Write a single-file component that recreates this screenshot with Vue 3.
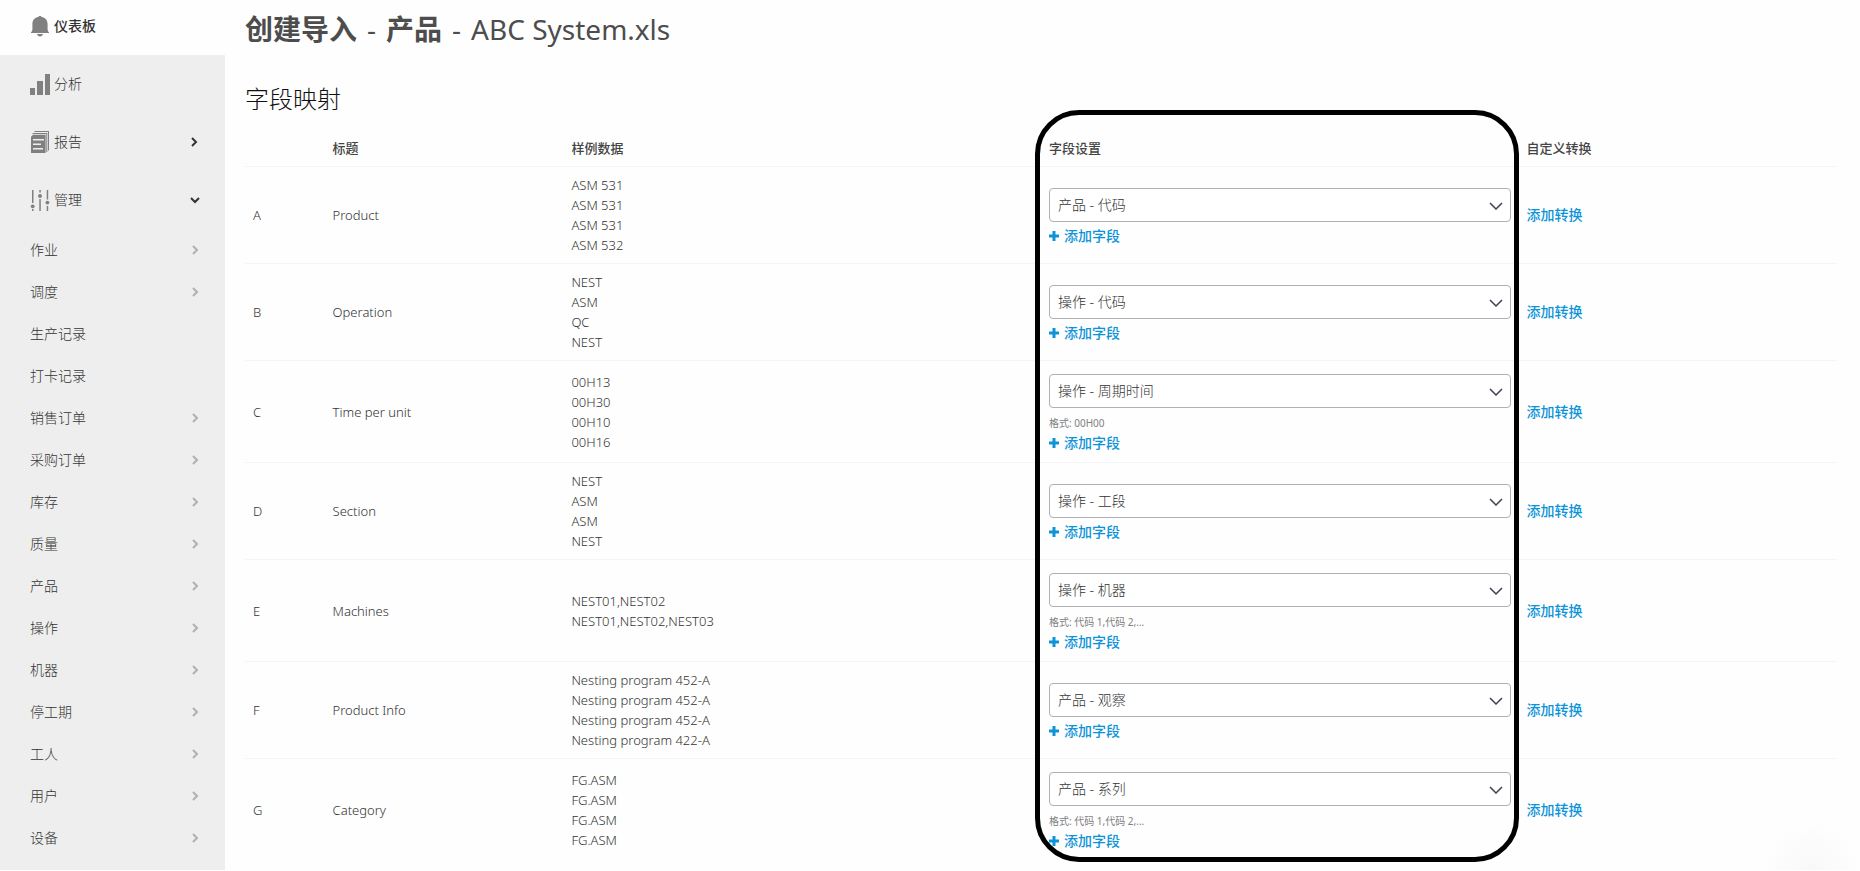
<script setup>
import { ref } from 'vue'

const subItems = [
  { label: '作业', more: true },
  { label: '调度', more: true },
  { label: '生产记录', more: false },
  { label: '打卡记录', more: false },
  { label: '销售订单', more: true },
  { label: '采购订单', more: true },
  { label: '库存', more: true },
  { label: '质量', more: true },
  { label: '产品', more: true },
  { label: '操作', more: true },
  { label: '机器', more: true },
  { label: '停工期', more: true },
  { label: '工人', more: true },
  { label: '用户', more: true },
  { label: '设备', more: true }
]

const options = [
  '产品 - 代码',
  '产品 - 观察',
  '产品 - 系列',
  '操作 - 代码',
  '操作 - 周期时间',
  '操作 - 工段',
  '操作 - 机器'
]

const rows = ref([
  { key: 'A', title: 'Product', samples: ['ASM 531', 'ASM 531', 'ASM 531', 'ASM 532'], field: '产品 - 代码' },
  { key: 'B', title: 'Operation', samples: ['NEST', 'ASM', 'QC', 'NEST'], field: '操作 - 代码' },
  { key: 'C', title: 'Time per unit', samples: ['00H13', '00H30', '00H10', '00H16'], field: '操作 - 周期时间', hint: '格式: 00H00' },
  { key: 'D', title: 'Section', samples: ['NEST', 'ASM', 'ASM', 'NEST'], field: '操作 - 工段' },
  { key: 'E', title: 'Machines', samples: ['NEST01,NEST02', 'NEST01,NEST02,NEST03'], field: '操作 - 机器', hint: '格式: 代码 1,代码 2,...' },
  { key: 'F', title: 'Product Info', samples: ['Nesting program 452-A', 'Nesting program 452-A', 'Nesting program 452-A', 'Nesting program 422-A'], field: '产品 - 观察' },
  { key: 'G', title: 'Category', samples: ['FG.ASM', 'FG.ASM', 'FG.ASM', 'FG.ASM'], field: '产品 - 系列', hint: '格式: 代码 1,代码 2,...' }
])
</script>

<template>
  <div class="page">
    <nav class="sidebar">
      <a class="item active" href="#">
        <svg class="icon" viewBox="0 0 20 22" aria-hidden="true">
          <path d="M10 1c.9 0 1.400.4 1.600 1C15.300 2.700 17.600 5.300 17.600 9v5c0 1.600.5 2.500 1.400 3.200V18H1v-.8c.9-.7 1.400-1.600 1.400-3.200V9c0-3.700 2.300-6.300 6-7C8.600 1.400 9.100 1 10 1zM7 19h6c-.3 1.600-1.400 2.500-3 2.500S7.300 20.600 7 19z" />
        </svg>
        <span>仪表板</span>
      </a>
      <a class="item" href="#">
        <svg class="icon" viewBox="0 0 20 22" aria-hidden="true">
          <path d="M0 15h5v7H0zM7 8h6v14H7zM15 1h5v21h-5z" />
        </svg>
        <span>分析</span>
      </a>
      <a class="item" href="#">
        <svg class="icon" viewBox="0 0 20 22" aria-hidden="true">
          <path d="M5 0h14v19.500h-1V1H4z" />
          <path d="M3 2h14.300v19h-1V3H2z" />
          <path fill-rule="evenodd" d="M3 3.800h12.600V22H1V5.800zM3 8v1.500h11V8zM3 12.500V14h8v-1.500zM3 17v1.500h10V17z" />
        </svg>
        <span>报告</span>
        <svg class="caret" viewBox="0 0 10 10" aria-hidden="true"><path d="M2 1l4 4-4 4" /></svg>
      </a>
      <a class="item" href="#">
        <svg class="icon" viewBox="0 0 20 22" aria-hidden="true">
          <path d="M2 1h1.500v13H2zM2 20h1.500v2H2zM9.300 1h1.500v2.500H9.300zM9.300 10h1.500v12H9.300zM16.700 1h1.500v9.500h-1.500zM16.700 17h1.500v5h-1.500z" />
          <circle cx="2.700" cy="17.300" r="1.900" />
          <circle cx="10" cy="7" r="2" />
          <circle cx="17.400" cy="13.600" r="1.900" />
        </svg>
        <span>管理</span>
        <svg class="caret" viewBox="0 0 10 10" aria-hidden="true"><path d="M1 3l4 4 4-4" /></svg>
      </a>
      <a v-for="s in subItems" :key="s.label" class="item sub" href="#">
        <span>{{ s.label }}</span>
        <svg v-if="s.more" class="caret" viewBox="0 0 10 10" aria-hidden="true"><path d="M3 1l4 4-4 4" /></svg>
      </a>
    </nav>

    <main class="main">
      <h1><b>创建导入</b><span>-</span><b>产品</b><span>-</span><span>ABC System.xls</span></h1>
      <h2>字段映射</h2>
      <div class="mapping">
        <table>
          <thead>
            <tr>
              <th class="c-key"></th>
              <th class="c-title">标题</th>
              <th class="c-wide">样例数据</th>
              <th class="c-wide">字段设置</th>
              <th class="c-custom">自定义转换</th>
            </tr>
          </thead>
          <tbody>
            <tr v-for="r in rows" :key="r.key">
              <td>{{ r.key }}</td>
              <td>{{ r.title }}</td>
              <td><div v-for="(s, i) in r.samples" :key="i">{{ s }}</div></td>
              <td>
                <div class="field">
                  <div class="select">
                    <select v-model="r.field" :aria-label="r.title">
                      <option v-for="o in options" :key="o">{{ o }}</option>
                    </select>
                    <svg viewBox="0 0 14 8" aria-hidden="true"><path d="M1 1l6 6 6-6" /></svg>
                  </div>
                  <div v-if="r.hint" class="hint">{{ r.hint }}</div>
                  <a class="link" href="#">
                    <svg viewBox="0 0 10 10" aria-hidden="true"><path d="M3.500 0h3v3.500H10v3H6.500V10h-3V6.500H0v-3h3.500z" /></svg>
                    <span>添加字段</span>
                  </a>
                </div>
              </td>
              <td><a class="link" href="#">添加转换</a></td>
            </tr>
          </tbody>
        </table>
        <div class="highlight"></div>
      </div>
      <div class="shade"></div>
    </main>
  </div>
</template>

<style>
body {
  background: #fefefe;
}
</style>

<style scoped>
.page {
  display: flex;
  box-sizing: border-box;
  min-height: 100vh;
  padding-bottom: 1px;
  font-family: "Noto Sans", "Noto Sans CJK SC", sans-serif;
  font-size: 13px;
  line-height: 20px;
  color: #333;
}

a {
  text-decoration: none;
}

.sidebar {
  flex: 0 0 225px;
  background: #eee;
}

.item {
  display: flex;
  align-items: center;
  box-sizing: border-box;
  height: 58px;
  padding: 0 25px 0 30px;
  color: #333;
  font-family: "Noto Sans CJK SC", sans-serif;
  font-size: 14px;
  font-weight: 300;
}

.item span {
  padding-bottom: 3px;
}

.item.active {
  height: 55px;
  padding-bottom: 3px;
  background: #fefefe;
  font-weight: 500;
}

.item.sub {
  height: 42px;
}

.icon {
  width: 20px;
  height: 22px;
  margin-right: 4px;
  fill: #808080;
}

.caret {
  width: 10px;
  height: 10px;
  margin-left: auto;
  fill: none;
  stroke: #333;
  stroke-width: 2;
}

.sub .caret {
  stroke: #b0b0b0;
}

.main {
  position: relative;
  flex: 1;
  min-width: 0;
  padding: 0 23px 0 20px;
}

h1 {
  display: flex;
  gap: 10px;
  margin: 0;
  padding-top: 9px;
  font-size: 28px;
  font-weight: 400;
  line-height: 40px;
  color: #4d4d4d;
}

h2 {
  margin: 0;
  padding: 30px 0 11px;
  font-size: 24px;
  font-weight: 300;
  line-height: 40px;
  color: #111;
}

.mapping {
  position: relative;
}

table {
  width: 100%;
  table-layout: fixed;
  border-collapse: collapse;
}

th,
td {
  box-sizing: border-box;
  padding: 8px;
  text-align: left;
  vertical-align: middle;
}

td {
  font-weight: 300;
}

tr {
  border-bottom: 1px solid #f4f4f4;
}

tbody tr:last-child {
  border-bottom: 0;
}

th {
  font-weight: 500;
  color: #444;
}

.c-key {
  width: 5%;
}

.c-title {
  width: 15%;
}

.c-wide {
  width: 30%;
}

.c-custom {
  width: 20%;
}

.field {
  padding: 5px 0 1px;
}

.select {
  position: relative;
  margin-bottom: 4px;
}

select {
  display: block;
  box-sizing: border-box;
  width: 100%;
  height: 34px;
  padding: 0 32px 2px 8px;
  border: 1px solid #b0b0b6;
  border-radius: 4px;
  background: #fff;
  appearance: none;
  font-family: inherit;
  font-size: 14px;
  font-weight: 300;
  color: #333;
}

.select svg {
  position: absolute;
  top: 14px;
  right: 8px;
  width: 14px;
  height: 8px;
  fill: none;
  stroke: #3c4250;
  stroke-width: 1.500;
  pointer-events: none;
}

.hint {
  height: 21px;
  font-size: 10px;
  line-height: 23px;
  font-weight: 400;
  color: #808080;
}

.link {
  display: flex;
  align-items: center;
  gap: 5px;
  font-size: 14px;
  font-weight: 500;
  color: #0c93d8;
}

.link svg {
  width: 10px;
  height: 10px;
  fill: #0c93d8;
}

.highlight {
  position: absolute;
  top: -20px;
  bottom: -2px;
  left: calc(50% - 6px);
  right: 20%;
  border: 5px solid #000;
  border-radius: 44px;
  pointer-events: none;
}

.shade {
  position: absolute;
  right: 0;
  bottom: 0;
  width: 96px;
  height: 50px;
  background: radial-gradient(circle at 50% 100%, #f8f8f8, #fefefe 46px);
  pointer-events: none;
}
</style>
